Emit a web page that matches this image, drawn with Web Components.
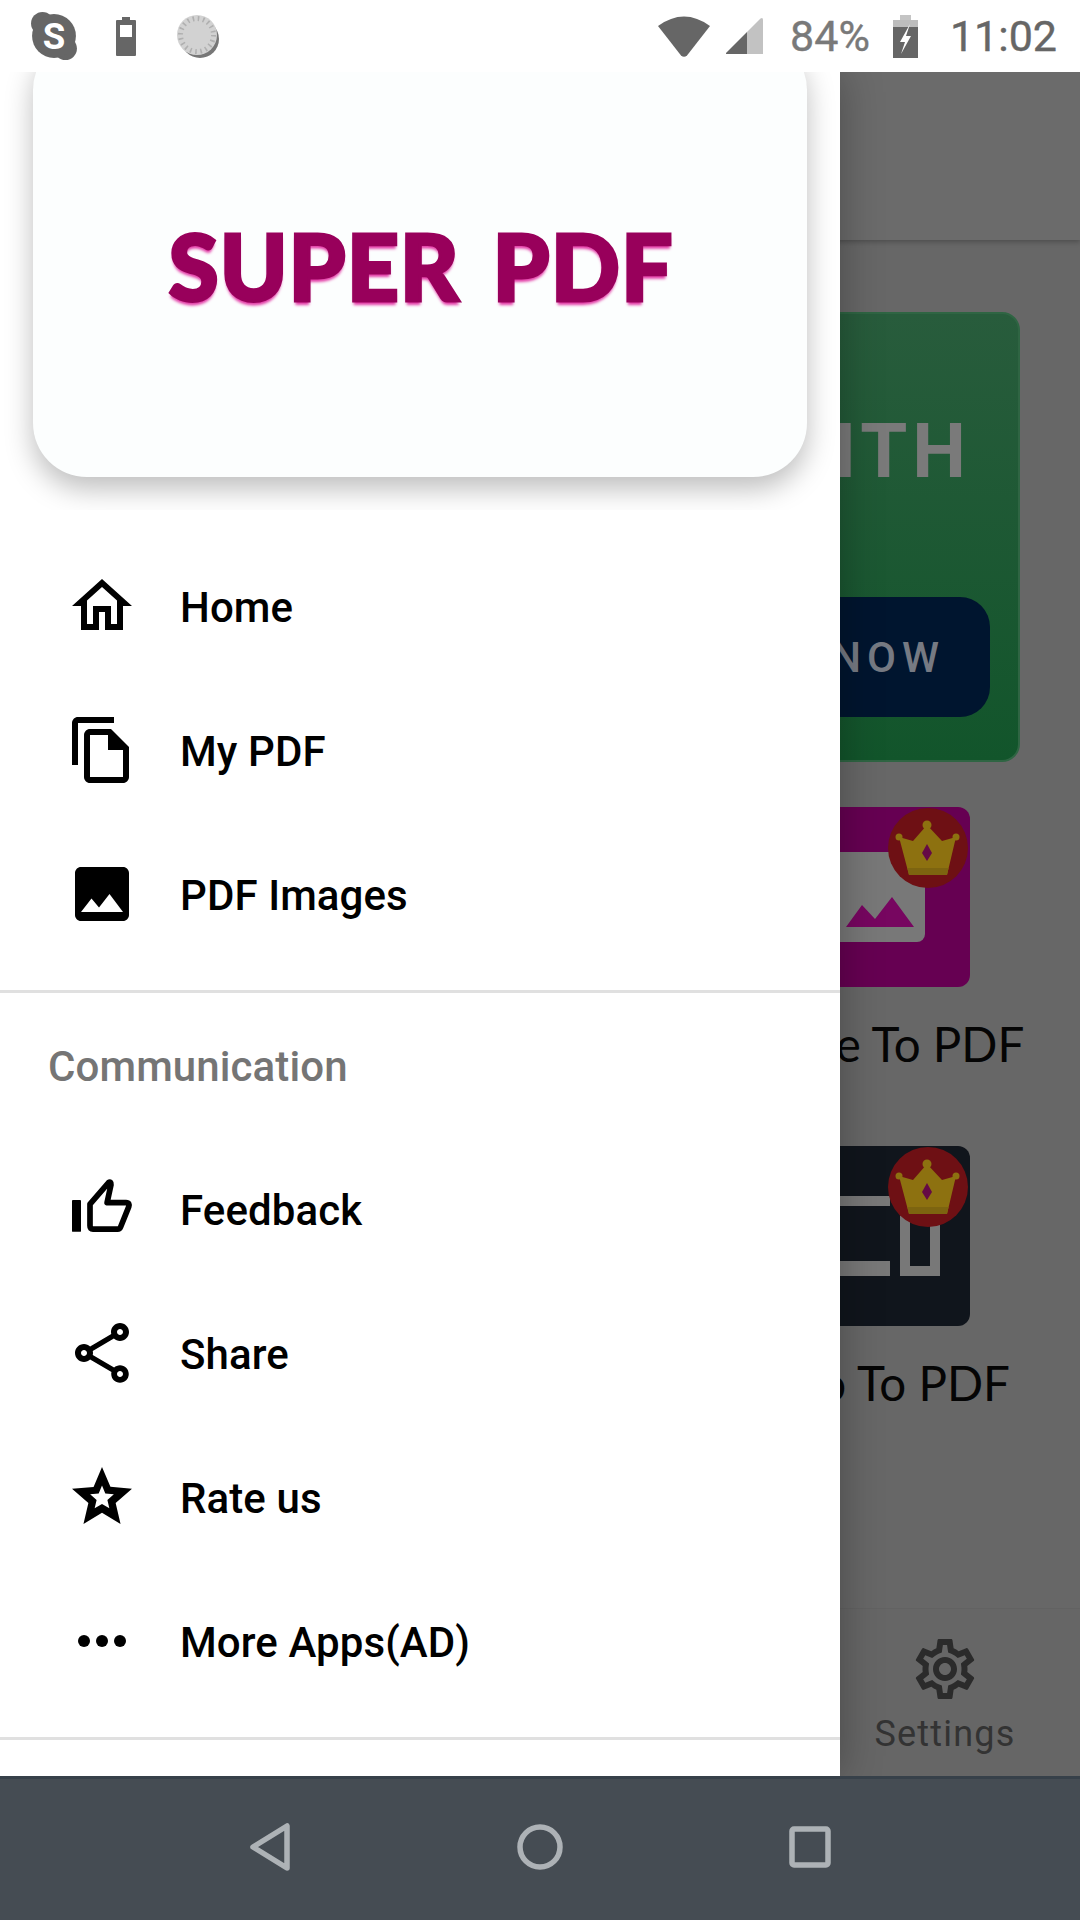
<!DOCTYPE html>
<html>
<head>
<meta charset="utf-8">
<title>Super PDF</title>
<style>
  html, body { margin: 0; padding: 0; background: #666; }
  body { width: 1080px; height: 1920px; overflow: hidden; font-family: Roboto, "Liberation Sans", sans-serif; }
</style>
</head>
<body>
<phone-screen>
  <status-bar slot="status"></status-bar>
  <home-screen slot="app"></home-screen>
  <side-drawer slot="drawer">
    <drawer-item label="Home"><svg viewBox="0 0 24 24"><path d="M12 5.69l5 4.5V18h-2v-6H9v6H7v-7.81l5-4.5M12 3L2 12h3v8h6v-6h2v6h6v-8h3L12 3z"/></svg></drawer-item>
    <drawer-item label="My PDF"><svg viewBox="0 0 24 24"><path d="M16 1H4c-1.1 0-2 .9-2 2v14h2V3h12V1zm-1 4H8c-1.1 0-1.99.9-1.99 2L6 21c0 1.1.89 2 1.99 2H19c1.1 0 2-.9 2-2V11l-6-6zM8 21V7h6v5h5v9H8z"/></svg></drawer-item>
    <drawer-item label="PDF Images"><svg viewBox="0 0 24 24"><path d="M21 19V5c0-1.1-.9-2-2-2H5c-1.1 0-2 .9-2 2v14c0 1.1.9 2 2 2h14c1.1 0 2-.9 2-2zM8.5 13.5l2.5 3.01L14.5 12l4.5 6H5l3.5-4.5z"/></svg></drawer-item>
    <drawer-divider></drawer-divider>
    <drawer-subheader>Communication</drawer-subheader>
    <drawer-item label="Feedback"><svg viewBox="0 0 24 24"><rect x="2" y="9" width="3" height="10.6" rx=".3"/><path fill="none" stroke="#000" stroke-width="1.9" stroke-linejoin="round" d="M8 17.6V10.4L14.2 3.2c.5-.4.9 0 .8.7L13.7 9.9H20c1 0 1.2.6.9 1.4L18.2 18c-.2.5-.6.7-1 .7H9c-.7 0-1-.4-1-1.1z"/></svg></drawer-item>
    <drawer-item label="Share"><svg viewBox="0 0 24 24"><path d="M18 16.08c-.76 0-1.44.3-1.96.77L8.91 12.7c.05-.23.09-.46.09-.7s-.04-.47-.09-.7l7.05-4.11c.54.5 1.25.81 2.04.81 1.66 0 3-1.34 3-3s-1.34-3-3-3-3 1.34-3 3c0 .24.04.47.09.7L8.04 9.81C7.5 9.31 6.79 9 6 9c-1.66 0-3 1.34-3 3s1.34 3 3 3c.79 0 1.5-.31 2.04-.81l7.12 4.16c-.05.21-.08.43-.08.65 0 1.61 1.31 2.92 2.92 2.92s2.92-1.31 2.92-2.92-1.31-2.92-2.92-2.92zM18 4c.55 0 1 .45 1 1s-.45 1-1 1-1-.45-1-1 .45-1 1-1zM6 13c-.55 0-1-.45-1-1s.45-1 1-1 1 .45 1 1-.45 1-1 1zm12 7.02c-.55 0-1-.45-1-1s.45-1 1-1 1 .45 1 1-.45 1-1 1z"/></svg></drawer-item>
    <drawer-item label="Rate us"><svg viewBox="0 0 24 24"><path fill-rule="evenodd" d="M22 9.24l-7.19-.62L12 2 9.19 8.63 2 9.24l5.46 4.73L5.82 21 12 17.27 18.18 21l-1.63-7.03L22 9.24zM12 8.2l1.1 2.65 2.85.25-2.15 1.87.65 2.8L12 14.3l-2.45 1.47.65-2.8-2.15-1.87 2.85-.25z"/></svg></drawer-item>
    <drawer-item label="More Apps(AD)"><svg viewBox="0 0 24 24"><circle cx="6" cy="12" r="2"/><circle cx="12" cy="12" r="2"/><circle cx="18" cy="12" r="2"/></svg></drawer-item>
    <drawer-divider></drawer-divider>
  </side-drawer>
  <nav-bar slot="nav"></nav-bar>
</phone-screen>

<script>
function makeTemplate(html) {
    const template = document.createElement('template');
    template.innerHTML = html;
    return template;
}

// base class, every element just clones its template into an open shadow root
class ShadowPart extends HTMLElement {
    constructor() {
        super();
        this.attachShadow({ mode: 'open' });
        this.shadowRoot.appendChild(this.constructor.template.content.cloneNode(true));
    }
}

class PhoneScreen extends ShadowPart {
    static template = makeTemplate(`
        <style>
            :host { display: flex; flex-direction: column; width: 1080px; height: 1920px; }
            .main { position: relative; flex: 1; overflow: hidden; display: flex; }
        </style>
        <slot name="status"></slot>
        <div class="main">
            <slot name="app"></slot>
            <slot name="drawer"></slot>
        </div>
        <slot name="nav"></slot>
    `);
}

class StatusBar extends ShadowPart {
    static template = makeTemplate(`
        <style>
            :host { display: flex; align-items: center; justify-content: space-between; height: 72px; background: #fff; padding: 0 23px 0 30px; font-family: Roboto, sans-serif; font-size: 43px; position: relative; z-index: 3; }
            .group { display: flex; align-items: center; }
            svg { display: block; }
            .pct { color: #797979; margin: 0 23px 0 27px; line-height: 72px; -webkit-text-stroke: .4px #797979; }
            .time { color: #666; margin-left: 32px; line-height: 72px; -webkit-text-stroke: .4px #666; }
        </style>
        <div class="group">
            <svg width="48" height="48" viewBox="0 0 46 46" style="margin-right:38px">
                <circle cx="12" cy="11" r="11" fill="#666"/><circle cx="34" cy="35" r="11" fill="#666"/><circle cx="23" cy="23" r="21" fill="#666"/>
                <text x="23" y="35" text-anchor="middle" font-family="Roboto, sans-serif" font-weight="700" font-size="35" fill="#fff">S</text>
            </svg>
            <svg width="20" height="39" viewBox="0 0 20 39" style="margin-right:41px">
                <path d="M6 0h8v3h5q1 0 1 1v34q0 1-1 1H1q-1 0-1-1V4q0-1 1-1h5z" fill="#666"/>
                <rect x="4" y="8" width="12" height="12" fill="#fff"/>
            </svg>
            <svg width="43" height="43" viewBox="0 0 43 43">
                <circle cx="23" cy="24" r="19" fill="#777"/>
                <circle cx="20" cy="20" r="20" fill="#d2d2d2"/>
                <circle cx="20" cy="20" r="16.5" fill="none" stroke="#b0b0b0" stroke-width="5" stroke-dasharray="1.6 3.6"/>
            </svg>
        </div>
        <div class="group">
            <svg width="52" height="41" viewBox="0 0 52 41" style="margin-right:16px">
                <path d="M0 10Q26-9 52 10L29 39.5Q26 42 23 39.5Z" fill="#666"/>
            </svg>
            <svg width="37" height="36" viewBox="0 0 37 36">
                <path d="M21 14L34.5 .5Q37-1 37 2V36H21Z" fill="#c2c2c2"/>
                <path d="M0 35L21 14V36H1Q-.5 36 0 35Z" fill="#666"/>
            </svg>
            <span class="pct">84%</span>
            <svg width="25" height="43" viewBox="0 0 25 43">
                <rect x="7" y="0" width="11" height="6" fill="#c4c4c4"/>
                <rect x="0" y="5" width="25" height="7" fill="#bdbdbd"/>
                <rect x="0" y="12" width="25" height="31" fill="#666"/>
                <path d="M17 9L7 27H12L8 39 18 21H13L17 9Z" fill="#fff"/>
            </svg>
            <span class="time">11:02</span>
        </div>
    `);
}

class NavBar extends ShadowPart {
    static template = makeTemplate(`
        <style>
            :host { display: flex; justify-content: center; height: 141px; background: #454c53; border-top: 3px solid #37414a; position: relative; z-index: 3; }
            .btn { width: 270px; display: flex; align-items: center; justify-content: center; padding-bottom: 6px; }
            svg { display: block; fill: none; stroke: #adb2b6; stroke-width: 5.5; stroke-linejoin: round; }
        </style>
        <div class="btn"><svg width="46" height="52" viewBox="0 0 46 52" style="margin-left:4px"><path d="M38 5V47L4 26Z"/></svg></div>
        <div class="btn"><svg width="52" height="52" viewBox="0 0 52 52"><circle cx="26" cy="26" r="20"/></svg></div>
        <div class="btn"><svg width="46" height="46" viewBox="0 0 46 46"><rect x="5" y="5" width="36" height="36" rx="2"/></svg></div>
    `);
}

class HomeScreen extends ShadowPart {
    static template = makeTemplate(`
        <style>
            :host { display: flex; flex-direction: column; width: 1080px; background: #676767; }
            .appbar { height: 168px; flex: none; background: #6b6b6b; box-shadow: 0 2px 5px rgba(0,0,0,.25); }
            .content { flex: 1; padding: 72px 60px 0 60px; display: flex; flex-direction: column; }
            .tiles { display: flex; flex-direction: column; align-items: flex-end; gap: 73px; margin-top: 45px; padding-right: 50px; }
            .tabs { flex: none; height: 168px; display: flex; justify-content: flex-end; border-top: 1px solid #626262; background: #666; box-sizing: border-box; }
            .tab { width: 270px; display: flex; flex-direction: column; align-items: center; padding-top: 24px; color: #333; font-size: 36px; letter-spacing: 1.2px; line-height: 46px; }
            .tab svg { width: 72px; height: 72px; fill: #2b2b2b; display: block; margin-bottom: 6px; }
        </style>
        <div class="appbar"></div>
        <div class="content">
            <promo-card></promo-card>
            <div class="tiles">
                <feature-tile label="Image To PDF" color="#660052">
                    <svg width="180" height="180" viewBox="0 0 180 180">
                        <rect x="-10" y="45" width="145" height="90" rx="8" fill="#787878"/>
                        <path d="M56 120L72 98 85 112 102 90 124 120Z" fill="#770660"/>
                    </svg>
                </feature-tile>
                <feature-tile label="Video To PDF" color="#10151c" shift="26">
                    <svg width="180" height="180" viewBox="0 0 180 180">
                        <path d="M0 50H100V60H0ZM0 115H100V130H0Z" fill="#787878"/>
                        <path d="M115 35V125H145V35" fill="none" stroke="#787878" stroke-width="10"/>
                    </svg>
                </feature-tile>
            </div>
        </div>
        <div class="tabs">
            <div class="tab">
                <svg viewBox="0 0 24 24"><path d="M19.43 12.98c.04-.32.07-.64.07-.98 0-.34-.03-.66-.07-.98l2.11-1.65c.19-.15.24-.42.12-.64l-2-3.46c-.09-.16-.26-.25-.44-.25-.06 0-.12.01-.17.03l-2.49 1c-.52-.4-1.08-.73-1.69-.98l-.38-2.65C14.46 2.18 14.25 2 14 2h-4c-.25 0-.46.18-.49.42l-.38 2.65c-.61.25-1.17.59-1.69.98l-2.49-1c-.06-.02-.12-.03-.18-.03-.17 0-.34.09-.43.25l-2 3.46c-.13.22-.07.49.12.64l2.11 1.65c-.04.32-.07.65-.07.98 0 .33.03.66.07.98l-2.11 1.65c-.19.15-.24.42-.12.64l2 3.46c.09.16.26.25.44.25.06 0 .12-.01.17-.03l2.49-1c.52.4 1.08.73 1.69.98l.38 2.65c.03.24.24.42.49.42h4c.25 0 .46-.18.49-.42l.38-2.65c.61-.25 1.17-.59 1.69-.98l2.49 1c.06.02.12.03.18.03.17 0 .34-.09.43-.25l2-3.46c.12-.22.07-.49-.12-.64l-2.11-1.65zm-1.98-1.71c.04.31.05.52.05.73 0 .21-.02.43-.05.73l-.14 1.13.89.7 1.08.84-.7 1.21-1.27-.51-1.04-.42-.9.68c-.43.32-.84.56-1.25.73l-1.06.43-.16 1.13-.2 1.35h-1.4l-.19-1.35-.16-1.13-1.06-.43c-.43-.18-.83-.41-1.23-.71l-.91-.7-1.06.43-1.27.51-.7-1.21 1.08-.84.89-.7-.14-1.13c-.03-.31-.05-.54-.05-.74s.02-.43.05-.73l.14-1.13-.89-.7-1.08-.84.7-1.21 1.27.51 1.04.42.9-.68c.43-.32.84-.56 1.25-.73l1.06-.43.16-1.13.2-1.35h1.39l.19 1.35.16 1.13 1.06.43c.43.18.83.41 1.23.71l.91.7 1.06-.43 1.27-.51.7 1.21-1.07.85-.89.7.14 1.13zM12 8c-2.21 0-4 1.79-4 4s1.79 4 4 4 4-1.79 4-4-1.79-4-4-4zm0 6c-1.1 0-2-.9-2-2s.9-2 2-2 2 .9 2 2-.9 2-2 2z"/></svg>
                <span>Settings</span>
            </div>
        </div>
    `);
}

class PromoCard extends ShadowPart {
    static template = makeTemplate(`
        <style>
            :host { display: flex; flex-direction: column; align-items: flex-end; box-sizing: border-box; height: 450px; border: 2px solid #2f6543; border-radius: 18px; background: linear-gradient(#285c3c, #12552b); padding: 92px 28px 0 0; font-family: Roboto, sans-serif; color: #7a7a7a; }
            .title { font-size: 76px; line-height: 90px; font-weight: 700; letter-spacing: 5px; margin-right: 19px; }
            .btn { margin-top: 101px; width: 700px; height: 120px; box-sizing: border-box; background: #00152f; border-radius: 30px; display: flex; align-items: center; justify-content: flex-end; padding-right: 45px; font-size: 42px; font-weight: 500; letter-spacing: 6px; color: #767a83; }
        </style>
        <div class="title">ITH</div>
        <div class="btn">NOW</div>
    `);
}

class CrownBadge extends ShadowPart {
    static template = makeTemplate(`
        <style>
            :host { position: absolute; top: 1px; right: 2px; width: 80px; height: 80px; border-radius: 50%; background: #6e1014; display: block; }
            svg { display: block; }
        </style>
        <svg width="80" height="80" viewBox="0 0 80 80">
            <circle cx="39" cy="17" r="4.5" fill="#8d7110"/><circle cx="11" cy="29" r="3.5" fill="#8d7110"/><circle cx="68" cy="29" r="3.5" fill="#8d7110"/>
            <path d="M11 29L25 33 39 17 54 33 68 29 59 67H21Z" fill="#8d7110"/>
            <path d="M19.4 60H60.6L59 67H21Z" fill="#7d6410"/>
            <path d="M39 36L44 45 39 53 34 45Z" fill="#650a45"/>
        </svg>
    `);
}

class FeatureTile extends ShadowPart {
    static template = makeTemplate(`
        <style>
            :host { display: flex; flex-direction: column; align-items: center; width: 180px; }
            .box { position: relative; width: 180px; height: 180px; border-radius: 12px; overflow: hidden; }
            .wrap { position: relative; width: 180px; height: 180px; }
            .label { margin-top: 28px; font-family: Lato, sans-serif; font-size: 47.5px; line-height: 58px; color: #050505; white-space: nowrap; }
            ::slotted(svg) { display: block; }
        </style>
        <div class="wrap">
            <div class="box"><slot></slot></div>
            <crown-badge></crown-badge>
        </div>
        <div class="label"></div>
    `);

    connectedCallback() {
        this.shadowRoot.querySelector('.box').style.background = this.getAttribute('color');
        const label = this.shadowRoot.querySelector('.label');
        label.textContent = this.getAttribute('label');
        if (this.hasAttribute('shift')) label.style.paddingRight = this.getAttribute('shift') + 'px';
    }
}

class SideDrawer extends ShadowPart {
    static template = makeTemplate(`
        <style>
            :host { position: absolute; left: 0; top: 0; bottom: 0; width: 840px; background: #fff; box-shadow: 0 0 40px rgba(0,0,0,.3); display: block; }
            .header { height: 438px; overflow: hidden; }
            .menu { padding-top: 24px; }
        </style>
        <div class="header"><logo-card></logo-card></div>
        <div class="menu"><slot></slot></div>
    `);
}

class LogoCard extends ShadowPart {
    static template = makeTemplate(`
        <style>
            :host { display: flex; align-items: center; justify-content: center; box-sizing: border-box; width: 774px; height: 441px; margin: -36px 0 0 33px; padding-top: 19px; background: #fcfefe; border-radius: 54px; box-shadow: 0 12px 28px rgba(0,0,0,.26); }
            .logo { font-family: Lato, sans-serif; font-weight: 900; font-size: 91px; line-height: 100px; letter-spacing: 1px; word-spacing: 10px; margin-left: 2px; color: #98005b; -webkit-text-stroke: 3px #98005b; text-shadow: 0 4px 3px #e23ba6; }
        </style>
        <div class="logo">SUPER PDF</div>
    `);
}

class DrawerItem extends ShadowPart {
    static template = makeTemplate(`
        <style>
            :host { display: flex; align-items: center; height: 144px; padding-left: 66px; gap: 42px; font-family: Roboto, sans-serif; font-size: 42px; font-weight: 500; letter-spacing: .1px; color: #000; }
            .icon { width: 72px; height: 72px; flex: none; }
            .text { padding-top: 2px; }
            ::slotted(svg) { display: block; width: 72px; height: 72px; }
        </style>
        <div class="icon"><slot></slot></div>
        <span class="text"></span>
    `);

    connectedCallback() {
        this.shadowRoot.querySelector('.text').textContent = this.getAttribute('label');
    }
}

class DrawerDivider extends ShadowPart {
    static template = makeTemplate(`
        <style>
            :host { display: block; height: 3px; margin-top: 24px; background: #e0e0e0; }
        </style>
    `);
}

class DrawerSubheader extends ShadowPart {
    static template = makeTemplate(`
        <style>
            :host { display: flex; align-items: center; height: 144px; padding-left: 48px; padding-top: 2px; box-sizing: border-box; font-family: Roboto, sans-serif; font-size: 42px; font-weight: 500; letter-spacing: .1px; color: #757575; }
        </style>
        <slot></slot>
    `);
}

customElements.define('crown-badge', CrownBadge);
customElements.define('feature-tile', FeatureTile);
customElements.define('promo-card', PromoCard);
customElements.define('logo-card', LogoCard);
customElements.define('drawer-item', DrawerItem);
customElements.define('drawer-divider', DrawerDivider);
customElements.define('drawer-subheader', DrawerSubheader);
customElements.define('side-drawer', SideDrawer);
customElements.define('home-screen', HomeScreen);
customElements.define('status-bar', StatusBar);
customElements.define('nav-bar', NavBar);
customElements.define('phone-screen', PhoneScreen);
</script>
</body>
</html>
